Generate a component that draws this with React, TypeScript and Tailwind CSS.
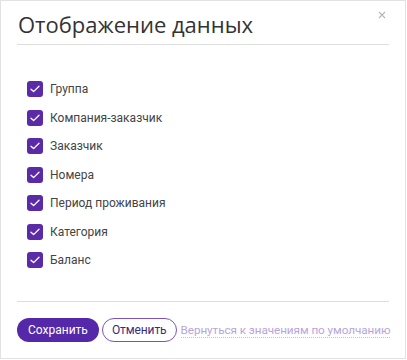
import React, { useState } from 'react';

const FIELDS = [
  'Группа',
  'Компания-заказчик',
  'Заказчик',
  'Номера',
  'Период проживания',
  'Категория',
  'Баланс',
];

function Check({ checked }: { checked: boolean }) {
  return (
    <span
      className={
        checked
          ? 'w-4 h-4 rounded-[3px] bg-[#5b2aa6] flex items-center justify-center shrink-0'
          : 'w-4 h-4 rounded-[3px] border border-[#bbb] bg-white shrink-0'
      }
    >
      {checked && (
        <svg width="10" height="8" viewBox="0 0 10 8" fill="none">
          <path d="M1 4.2L3.6 6.6L9 1.2" stroke="white" strokeWidth="1.3" strokeLinecap="round" strokeLinejoin="round" />
        </svg>
      )}
    </span>
  );
}

export default function App() {
  const [checked, setChecked] = useState<boolean[]>(FIELDS.map(() => true));

  return (
    <div className="w-[407px] h-[360px] bg-white" style={{ fontFamily: 'Roboto, "Noto Sans", sans-serif' }}>
      <div className="relative w-[406px] h-[359px] border border-[#e2e2e2] flex flex-col px-4">
        <button className="absolute right-[19px] top-[10px] text-[#b5b5b5] leading-none">
          <svg width="8" height="8" viewBox="0 0 8 8">
            <path d="M1 1L7 7M7 1L1 7" stroke="currentColor" strokeWidth="1.1" />
          </svg>
        </button>

        <h1
          className="pt-[11px] pb-[8px] pl-[1px] text-[22px] leading-[24px] text-[#333] border-b border-[#dedede]"
          style={{ fontFamily: '"Open Sans", sans-serif' }}
        >
          Отображение данных
        </h1>

        <div className="flex flex-col gap-[12.5px] pt-[36px] pl-[10px]">
          {FIELDS.map((f, i) => (
            <label
              key={f}
              className="flex items-center gap-[7px] h-4 cursor-pointer"
              onClick={() => setChecked(checked.map((c, j) => (j === i ? !c : c)))}
            >
              <Check checked={checked[i]} />
              <span className="text-[12px] text-[#444]">{f}</span>
            </label>
          ))}
        </div>

        <div className="mt-[33px] border-t border-[#dedede] pt-[16px] flex items-center gap-[3px] whitespace-nowrap">
          <button className="h-6 px-[11px] rounded-full bg-[#5428a8] text-white text-[12px]">Сохранить</button>
          <button className="h-6 px-[9px] rounded-full border border-[#7a52c2] text-[#3d2a7a] text-[12px] tracking-[-0.1px]">Отменить</button>
          <button className="ml-[1px] text-[11.7px] tracking-[-0.05px] text-[#b8a3de] leading-[14px] border-b border-dotted border-[#c9b8e8]">
            Вернуться к значениям по умолчанию
          </button>
        </div>
      </div>
    </div>
  );
}
